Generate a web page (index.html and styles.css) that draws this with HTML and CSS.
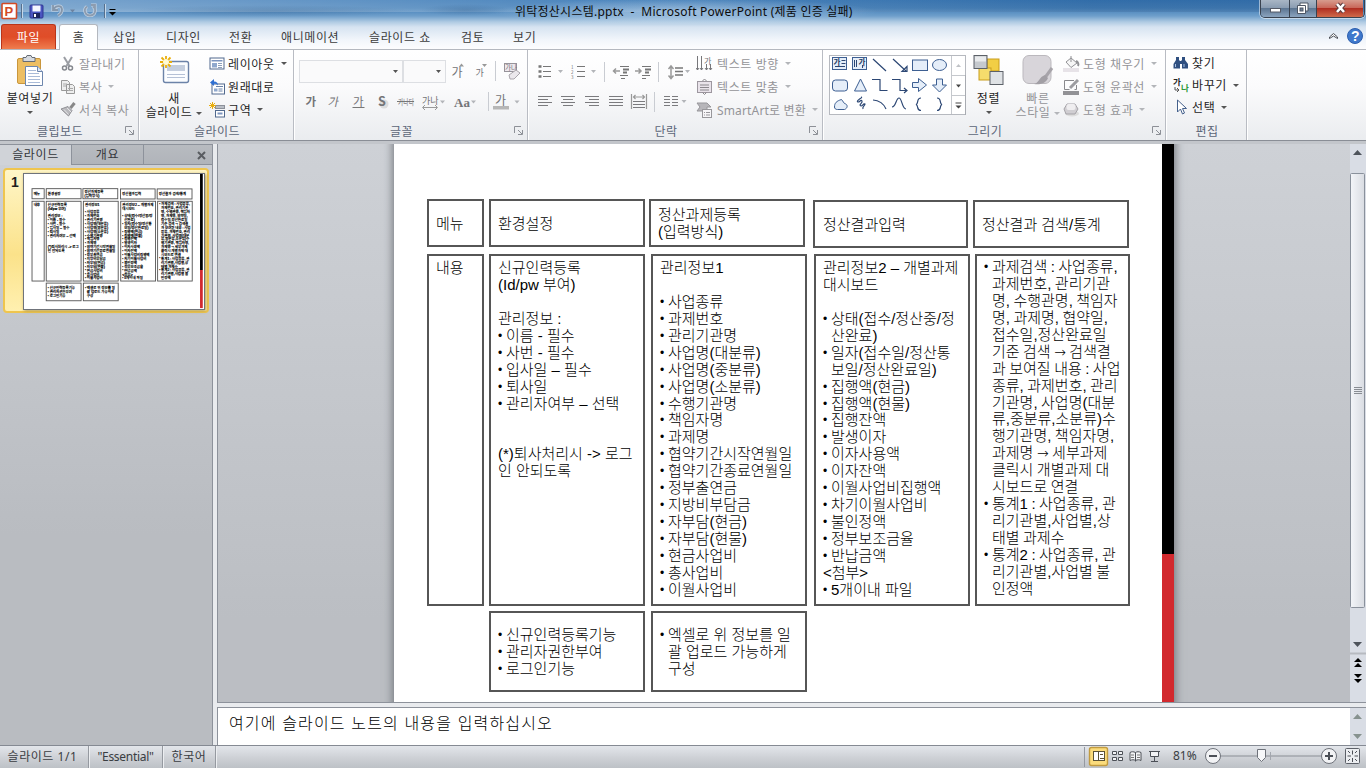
FILE: index.html
```html
<!DOCTYPE html>
<html lang="ko">
<head>
<meta charset="utf-8">
<title>위탁정산시스템.pptx - Microsoft PowerPoint</title>
<link rel="stylesheet" href="styles.css">
</head>
<body>
<div class="app">
  <header class="titlebar">
    <svg class="quick" width="120" height="24" viewBox="0 0 120 24">
      <rect x="2" y="3.500" width="14.500" height="15" rx="1" fill="#fff" stroke="#d24a26" stroke-width="1.600"/>
      <text x="4.500" y="16" class="logo-letter">P</text>
      <path d="M21.500 4v14M104.500 4v14" stroke="#566f8c"/>
      <path d="M22.500 4v14M105.500 4v14" stroke="#c4d8ea"/>
      <rect x="30" y="5" width="13" height="13" rx="1" fill="#4a55c0" stroke="#2f3791"/>
      <rect x="32.500" y="5.500" width="8" height="6" fill="#f4f7ff"/><rect x="33" y="13" width="7" height="5" fill="#1d2560"/><rect x="34" y="14" width="2" height="3" fill="#fff"/>
      <path d="M53 5v5h5M53.500 9.500c2-4 8-5 8.500 0c0 3-2 5-4 6" fill="none" stroke="#c3d3e4" stroke-width="3.200"/>
      <path d="M53 5v5h5M53.500 9.500c2-4 8-5 8.500 0c0 3-2 5-4 6" fill="none" stroke="#8496ab" stroke-width="1.800"/>
      <path d="M70 9.500h5l-2.500 3z" fill="#6b82a0"/>
      <path d="M87 6.500c-4 3-2 9 3 9s7-6 3-9M91 5h4v4" fill="none" stroke="#c3d3e4" stroke-width="3.200"/>
      <path d="M87 6.500c-4 3-2 9 3 9s7-6 3-9M91 5h4v4" fill="none" stroke="#8d9caf" stroke-width="1.800"/>
      <path d="M109.500 9.500h6" stroke="#000"/><path d="M109 12h7l-3.500 3.500z" fill="#000"/>
    </svg>
    <div class="title">위탁정산시스템.pptx&nbsp; -&nbsp; Microsoft PowerPoint (제품 인증 실패)</div>
    <div class="winbtns">
      <span class="wb"><svg width="28" height="17"><rect x="9.500" y="8.500" width="10" height="3.500" fill="#fff" stroke="#555a66"/></svg></span>
      <span class="wb"><svg width="26" height="17"><path d="M10 3h8v8h-8z" fill="#fff" stroke="#4d5664"/><path d="M7.500 5.500h8v8h-8z" fill="#fff" stroke="#4d5664"/><rect x="10" y="8" width="3" height="3" fill="#6e8199" stroke="#4d5664"/></svg></span>
      <span class="wb close"><svg width="46" height="17"><path d="M20 4l7 8M27 4l-7 8" stroke="#5c3a3c" stroke-width="4.500"/><path d="M20 4l7 8M27 4l-7 8" stroke="#fff" stroke-width="2.600"/></svg></span>
    </div>
  </header>
  <nav class="tabs">
    <span class="file">파일</span><span class="tab on">홈</span><span class="tab t3">삽입</span><span class="tab t4">디자인</span><span class="tab t5">전환</span><span class="tab t6">애니메이션</span><span class="tab t7">슬라이드 쇼</span><span class="tab t8">검토</span><span class="tab t9">보기</span>
    <svg class="help" width="42" height="24"><path d="M5.500 14.500v-1.500l4-3.500l4 3.500v1.500l-4-2.500z" fill="#fff" stroke="#4b4f57"/><circle cx="31" cy="12" r="7.500" fill="#3f78cc" stroke="#2c5fae"/><text x="27" y="17" class="q">?</text></svg>
  </nav>

  <section class="ribbon">
    <div class="group g1">
      <div class="body">
        <div class="big paste">
          <svg width="30" height="32"><rect x="2.500" y="3.500" width="23" height="25" rx="1.500" fill="#edbe62" stroke="#c9963c"/><path d="M8 2.500h3l1-2h4l1 2h3v4H8z" fill="#d5d9df" stroke="#666c75"/><path d="M10.500 11.500h12l5 5v14h-17z" fill="#fff" stroke="#6d86ad"/><path d="M13 15.500h8M13 18.500h11M13 21.500h12M13 24.500h12M13 27.500h12" stroke="#a9bbd8"/><path d="M22.500 11.500v5h5" fill="#dce6f5" stroke="#6d86ad"/></svg>
          <span>붙여넣기</span><i class="ar"></i>
        </div>
        <div class="rows off">
          <div><svg width="16" height="16"><path d="M4 1l5.500 9M12 1l-5.500 9" stroke="#9a9da3" stroke-width="2"/><circle cx="4.500" cy="12" r="2" fill="none" stroke="#85888e" stroke-width="1.500"/><circle cx="10.500" cy="12" r="2" fill="none" stroke="#85888e" stroke-width="1.500"/></svg><span>잘라내기</span></div>
          <div><svg width="16" height="16"><path d="M1.500 1.500h6l2 2v8h-8zM6.500 5.500h6l2 2v7h-8z" fill="#eee" stroke="#999"/><path d="M3 5h4M3 7h3M8 9.500h5M8 11.500h5" stroke="#aaa"/></svg><span>복사</span><i class="ar"></i></div>
          <div><svg width="16" height="16"><path d="M14.500 1l-4 5" stroke="#888" stroke-width="3"/><path d="M1 7l7-2.500l4 4L8.500 14z" fill="#b8b8bc" stroke="#929297"/><path d="M4 7.500l4.500 5M7 6l4 4" stroke="#e4e4e6"/></svg><span>서식 복사</span></div>
        </div>
      </div>
      <div class="cap">클립보드</div><svg class="dl" width="9" height="9"><use href="#launcher"/></svg>
    </div>

    <div class="group g2">
      <div class="body">
        <div class="big newslide">
          <svg width="32" height="32"><rect x="5.500" y="6.500" width="25" height="21" rx="2" fill="#fbfdff" stroke="#6c83a8" stroke-width="1.400"/><rect x="9" y="10" width="18" height="6" fill="#c4cede"/><path d="M9 19.500h18M9 22.500h18" stroke="#b5c1d6"/><path d="M8 1v12M2 7h12M3.500 2.500l9 9M12.500 2.500l-9 9" stroke="#e9ae0c" stroke-width="1.800"/><circle cx="8" cy="7" r="3" fill="#fffbd5"/></svg>
          <span>새</span><span>슬라이드<i class="ar"></i></span>
        </div>
        <div class="rows">
          <div><svg width="16" height="16"><rect x="1" y="2" width="14" height="11" fill="#fff" stroke="#50698e"/><rect x="2.500" y="4" width="11" height="1.500" fill="#7c95bf"/><rect x="3" y="7" width="5" height="4.500" fill="#8fa8cd"/><path d="M9 7.500h4M9 9.500h4M9 11.500h4" stroke="#8ea0bb"/></svg><span>레이아웃</span><i class="ar"></i></div>
          <div><svg width="16" height="16"><rect x="3" y="5" width="12.500" height="10" fill="#fff" stroke="#50698e"/><path d="M7 7.500h7M9.500 10h4M9.500 12h4" stroke="#6a82a8"/><rect x="5" y="9.500" width="3.500" height="3" fill="#8fa8cd"/><path d="M1 3.500L5 0v2.500c3 0 4 2 4 4c-1-1.500-2-2-4-1.800V7z" fill="#2f6fd2"/></svg><span>원래대로</span></div>
          <div><svg width="16" height="16"><rect x="6.500" y="3.500" width="9" height="3" fill="#b9bec6" stroke="#8b9099"/><rect x="6.500" y="8.500" width="9" height="6.500" fill="#fff" stroke="#50698e"/><path d="M8.500 11.500h5" stroke="#7c95bf" stroke-width="2"/><path d="M3.500 0v7M0 3.500h7M1 1l5 5M6 1l-5 5" stroke="#e9ae0c"/></svg><span>구역</span><i class="ar"></i></div>
        </div>
      </div>
      <div class="cap">슬라이드</div>
    </div>

    <div class="group g3">
      <svg class="cluster" width="233" height="72" viewBox="294 51 233 72">
        <rect x="299.500" y="60.500" width="103" height="22" fill="#fafafb" stroke="#dddfe3"/><rect x="403.500" y="60.500" width="42" height="22" fill="#fafafb" stroke="#dddfe3"/>
        <path d="M393 70h5l-2.500 3zM436 70h5l-2.500 3z" fill="#555"/>
        <text x="451.500" y="76.500" class="k" font-size="12">가</text><path d="M459 66.500h5l-2.500-3zM482 64h5l-2.500 3z" fill="#999"/>
        <text x="475.500" y="76" class="k" font-size="9">가</text>
        <path d="M495.500 61v20M488.500 92v19" stroke="#c9ccd2"/>
        <rect x="504.500" y="63.500" width="12" height="8" fill="#eee9ee" stroke="#97939a"/><text x="505" y="70" class="k" font-size="6.500">가나</text><path d="M509 75l7-5l4 3l-6 6h-4z" fill="#ebe8ec" stroke="#aaa6ac"/>
        <text x="305.500" y="106" class="k" font-size="11.500" font-weight="bold">가</text>
        <text transform="translate(327.500 106) skewX(-12)" class="k" font-size="11.500">가</text>
        <text x="353" y="106" class="k" font-size="11.500">가</text><path d="M352.500 107.500h12" stroke="#777"/>
        <circle cx="384" cy="104" r="4.500" fill="#ccc" opacity=".6"/><text x="378" y="106" class="k" font-size="12.500" font-weight="bold">S</text>
        <text x="398" y="105" class="k" font-size="8.500" textLength="16" lengthAdjust="spacingAndGlyphs">가나다</text><path d="M397 101.500h17" stroke="#777"/>
        <text x="422" y="104" class="k" font-size="9">가나</text><path d="M423 107.500h14M425 105l-2.500 2.500l2.500 2.500M435 105l2.500 2.500l-2.500 2.500" fill="none" stroke="#999"/>
        <text x="454" y="107" class="k serif" font-size="13">Aa</text>
        <path d="M440 100.500h5l-2.500 3zM471 100.500h5l-2.500 3zM514.500 100.500h5l-2.500 3z" fill="#b3b5b9"/>
        <text x="495" y="105" class="k" font-size="12">가</text><rect x="493" y="106" width="16" height="3.500" fill="#b6b6b6"/>
      </svg>
      <div class="cap">글꼴</div><svg class="dl" width="9" height="9"><use href="#launcher"/></svg>
    </div>

    <div class="group g4">
      <div class="body">
      <svg class="cluster" width="168" height="72" viewBox="528 51 168 72">
        <g stroke="#777" fill="none">
        <path d="M543 66.500h8M543 71.500h8M543 76.500h8M577 66.500h8M577 71.500h8M577 76.500h8"/>
        <path d="M538.500 66.500h3M538.500 71.500h3M538.500 76.500h3" stroke-width="2.500"/>
        <path d="M620 66.500h9M620 75.500h8M621 78.500h4M642 66.500h9M642 75.500h8M642 78.500h4" /><path d="M623 69.500h6M623 72.500h4M645 69.500h6M645 72.500h4" stroke-width="2"/><path d="M620 71h-6M616 68.500l-2.500 2.500l2.500 2.500M635 71h6M638.500 68.500l2.500 2.500l-2.500 2.500" stroke="#999" stroke-width="1.500"/>
        <path d="M671 67v10M668.500 69l2.500-3l2.500 3M668.500 75.500l2.500 3l2.500-3" stroke="#999" stroke-width="1.500"/><path d="M675 68h8M675 71.500h8M675 75h8" stroke-width="1.300"/>
        </g>
        <text x="571" y="69" class="k" font-size="4.500">1</text><text x="571" y="74" class="k" font-size="4.500">2</text><text x="571" y="79" class="k" font-size="4.500">3</text>
        <path d="M604.500 62v20M658.500 62v20M654.500 92v20" stroke="#c9ccd2"/>
        <path d="M558 70h5l-2.500 3zM591 70h5l-2.500 3zM685 70h5l-2.500 3zM681.500 100h5l-2.500 3z" fill="#b3b5b9"/>
        <g stroke="#7b7b7e" stroke-width="1.200"><path d="M538 96.500h14M538 99.500h10M538 102.500h14M538 105.500h10M561 96.500h14M563 99.500h10M561 102.500h14M563 105.500h10M585 96.500h14M589 99.500h10M585 102.500h14M589 105.500h10M609 96.500h14M609 99.500h14M609 102.500h14M609 105.500h14M633 101.500h12M633 104.500h12M633 107.500h12M672 96.500h6M672 99.500h6M672 102.500h6M672 105.500h6M664 96.500h6M664 99.500h6M664 102.500h6M664 105.500h6"/><path d="M631.500 94v15M646.500 94v15M633 97h12M635.500 95l-2 2l2 2M642.500 95l2 2l-2 2" fill="none" stroke="#999"/></g>
      </svg>
        <div class="rows off">
          <div><svg width="17" height="16"><path d="M1.500 0v14M5.500 0v14M10.500 8v6M14.500 8v6M0 12l1.500 2l1.500-2M4 12l1.500 2l1.500-2M9 12l1.500 2l1.500-2M13 12l1.500 2l1.500-2" fill="none" stroke="#77777a"/><text x="8" y="7.500" class="k" font-size="8">가</text></svg><span>텍스트 방향</span><i class="ar"></i></div>
          <div><svg width="17" height="16"><rect x="1.500" y="2.500" width="14" height="11" fill="#e9e3ea" stroke="#9d979f"/><path d="M4 6h9M4 8.500h9M4 11h9M6.500 2l2-2l2 2M6.500 13.500l2 2l2-2" fill="none" stroke="#8b888d"/></svg><span>텍스트 맞춤</span><i class="ar"></i></div>
          <div><svg width="17" height="16"><path d="M1 1h10l4 4h-4v4H1l3-4z" fill="#b7b6ba" stroke="#98979b"/><rect x="6.500" y="7.500" width="9" height="8" fill="#f7f6f8" stroke="#98979b"/><path d="M8 10.500h1M10 10.500h4M8 13h1M10 13h4" stroke="#98979b"/></svg><span class="smart">SmartArt로 변환</span><i class="ar"></i></div>
        </div>
      </div>
      <div class="cap">단락</div><svg class="dl" width="9" height="9"><use href="#launcher"/></svg>
    </div>

    <div class="group g5">
      <div class="body">
      <svg class="cluster" width="142" height="72" viewBox="823 51 142 72">
        <rect x="829.500" y="55.500" width="136" height="59" fill="#fff" stroke="#b6b9bf"/>
        <path d="M951.500 56v58M952 75.500h13M952 95.500h13" stroke="#c5c8cd"/><path d="M965.500 75v40" stroke="#a8abb1"/>
        <path d="M956 67h5l-2.500-3z" fill="#c0c2c6"/><path d="M956 84.500h5l-2.500 3zM955.500 105.500h6l-3 3z" fill="#444"/><path d="M955.500 103h6" stroke="#444"/>
        <g fill="#e5eef9" stroke="#3d5f92">
          <rect x="832.500" y="57.500" width="14" height="12"/><rect x="852.500" y="57.500" width="14" height="12"/>
          <rect x="912.500" y="60" width="15" height="10.500"/><ellipse cx="939.500" cy="65" rx="7" ry="5.500"/>
          <rect x="832.500" y="80" width="15" height="11" rx="3"/><path d="M860.500 79l6 12h-12z"/>
          <path d="M912.500 82.500h6v-4l8 6.500l-8 6.500v-4h-6zM936.500 79h6v6h4l-7 7l-7-7h4z"/>
          <path d="M834.500 107c0-4 2-6 7-7.500l3 4c4 1 3 5 0 6h-7c-2 0-3-1-3-2.500z"/>
        </g>
        <g fill="none" stroke="#2c4774">
          <path d="M841.500 60.500h4M841.500 63.500h4M835 66.500h10M854.500 60v7M856.500 60v7M862.500 65v3"/>
          <path d="M873 59l13 12M893 59l13 12M907 66.500v5h-5zM872 79.500h8v11h7.500M892 79.500h8v11h7M904 88l3 2.500l-3 2.500" stroke-width="1.200"/>
          <path d="M861 97c3 0-6 4-3 5c2 0 3-3 4-1c1 2-4 4-1 5c2 0 2-3 4-2c0 2-3 2-2 5M873 100c6 0 11 4 13 9M892 107c4 0 4-9 7-9s3 11 7 11M921 98c-5 0-2 6-5 6.500c3 1 0 6 5 6M937 98c5 0 2 6 5 6.500c-3 1 0 6-5 6" stroke-width="1.200"/>
        </g>
        <text x="833.500" y="64.500" class="k navy" font-size="7.500">가</text><text x="858.500" y="64.500" class="k navy" font-size="7.500">가</text>
      </svg>
        <div class="big arrange"><svg width="32" height="32"><rect x="14" y="4" width="12" height="12" fill="#f2ce45" stroke="#c99d1d"/><rect x="6" y="13" width="12" height="12" fill="#f5dc6c" stroke="#c99d1d"/><rect x="1" y="0.500" width="13" height="13" fill="#c5c9ce" stroke="#5c6168"/><rect x="17" y="16.500" width="13" height="13" fill="#dfe2e5" stroke="#5c6168"/><path d="M2 1.500h11v5H2z" fill="#e9ebed"/></svg><span>정렬</span><i class="ar"></i></div>
        <div class="big quickstyle off"><svg width="32" height="32"><rect x="1" y="0.500" width="28" height="28" rx="6" fill="#d8d5da" stroke="#bbb8bd"/><path d="M30 13l-8 11" stroke="#a7a4aa" stroke-width="3"/><path d="M23 20l3 3c-2 5-7 7-14 6c5-1 5-7 11-9z" fill="#a29fa5"/></svg><span>빠른</span><span>스타일<i class="ar"></i></span></div>
        <div class="rows off">
          <div><svg width="17" height="16"><rect x="0" y="12" width="16" height="4" fill="#e7e3e8"/><path d="M3 6l5-4l6 5l-6 4.500zM8 6V0" fill="#f6f6f6" stroke="#929296"/><path d="M13 5c2 1 3 3 2 5" fill="none" stroke="#929296" stroke-width="2"/></svg><span>도형 채우기</span><i class="ar"></i></div>
          <div><svg width="17" height="16"><rect x="0" y="12" width="16" height="4" fill="#929296"/><path d="M11 1.500H1.500v9h5M13.500 6v4.500h-2" fill="none" stroke="#88888c"/><path d="M15 1L7 9" stroke="#9c9ca0" stroke-width="3"/></svg><span>도형 윤곽선</span><i class="ar"></i></div>
          <div><svg width="17" height="16"><ellipse cx="9" cy="11.500" rx="7" ry="3" fill="#ddd"/><path d="M4 2h8l3 5l-3 5H3L1 7z" fill="#d0ced2" stroke="#a5a3a8"/><rect x="3.500" y="2" width="9" height="6" rx="2" fill="#efeef0"/></svg><span>도형 효과</span><i class="ar"></i></div>
        </div>
      </div>
      <div class="cap">그리기</div><svg class="dl" width="9" height="9"><use href="#launcher"/></svg>
    </div>

    <div class="group g6">
      <div class="body"><div class="rows">
        <div><svg width="16" height="16"><path d="M3 2h3v3l1 1h1l1-1V2h3v3l3 4v4.500H9V9H7v4.500H0.500V9L3 5z" fill="#2f4f80"/><path d="M2.500 9v3M11 9v3" stroke="#a9c1e2"/></svg><span>찾기</span></div>
        <div><svg width="16" height="16"><text x="0" y="7.500" class="k dark" font-size="8.500" font-weight="bold">가</text><text x="8" y="13.500" class="k green" font-size="8.500" font-weight="bold">나</text><path d="M2 10v3h4M4 11l2 2l-2 2" fill="none" stroke="#555"/></svg><span>바꾸기</span><i class="ar"></i></div>
        <div><svg width="16" height="16"><path d="M4.500 1v12l3-3l2 5l2-1l-2-4.500h4z" fill="#fff" stroke="#44608c"/></svg><span>선택</span><i class="ar"></i></div>
      </div></div>
      <div class="cap">편집</div>
    </div>
  </section>

  <main class="work">
    <aside class="pane">
      <div class="ptabs"><span class="pt on">슬라이드</span><span class="pt two">개요</span><svg class="px" width="12" height="12"><path d="M2 2l7 7M9 2L2 9" stroke="#595c61" stroke-width="2"/></svg></div>
      <div class="thumb"><b>1</b><div class="mini" id="mini"></div></div>
    </aside>
    <div class="center">
      <div class="stage">
        <div class="canvas">
          <div class="slide" id="slide">
            <div class="box mid b1">메뉴</div>
            <div class="box mid b2">환경설정</div>
            <div class="box mid b3">정산과제등록<br>(입력방식)</div>
            <div class="box mid b4">정산결과입력</div>
            <div class="box mid b5">정산결과 검색/통계</div>
            <div class="box c1">내용</div>
            <div class="box c2">신규인력등록<br>(Id/pw 부여)<br><br>관리정보 :<ul><li>이름 - 필수<li>사번 - 필수<li>입사일 – 필수<li>퇴사일<li>관리자여부 – 선택</ul><br><br>(*)퇴사처리시 -&gt; 로그<br>인 안되도록</div>
            <div class="box c3">관리정보1<br><br><ul><li>사업종류<li>과제번호<li>관리기관명<li>사업명(대분류)<li>사업명(중분류)<li>사업명(소분류)<li>수행기관명<li>책임자명<li>과제명<li>협약기간시작연월일<li>협약기간종료연월일<li>정부출연금<li>지방비부담금<li>자부담(현금)<li>자부담(현물)<li>현금사업비<li>총사업비<li>이월사업비</ul></div>
            <div class="box c4">관리정보2 – 개별과제<br>대시보드<br><br><ul><li>상태(접수/정산중/정<br>산완료)<li>일자(접수일/정산통<br>보일/정산완료일)<li>집행액(현금)<li>집행액(현물)<li>집행잔액<li>발생이자<li>이자사용액<li>이자잔액<li>이월사업비집행액<li>차기이월사업비<li>불인정액<li>정부보조금율<li>반납금액</ul>&lt;첨부&gt;<ul><li>5개이내 파일</ul></div>
            <div class="box c5"><ul><li>과제검색 : 사업종류,<br>과제번호, 관리기관<br>명, 수행관명, 책임자<br>명, 과제명, 협약일,<br>접수일,정산완료일<br>기준 검색 <span class="arrow">→</span> 검색결<br>과 보여질 내용 : 사업<br>종류, 과제번호, 관리<br>기관명, 사업명(대분<br>류,중분류,소분류)수<br>행기관명, 책임자명,<br>과제명 <span class="arrow">→</span> 세부과제<br>클릭시 개별과제 대<br>시보드로 연결<li>통계1 : 사업종류, 관<br>리기관별,사업별,상<br>태별 과제수<li>통계2 : 사업종류, 관<br>리기관별,사업별 불<br>인정액</ul></div>
            <div class="box mid d2"><ul><li>신규인력등록기능<li>관리자권한부여<li>로그인기능</ul></div>
            <div class="box mid d3"><ul><li>엑셀로 위 정보를 일<br>괄 업로드 가능하게<br>구성</ul></div>
            <div class="stripe"></div>
          </div>
        </div>
        <svg class="vscroll" width="16" height="558"><defs><linearGradient id="sb"><stop offset="0" stop-color="#f3f5f9"/><stop offset="1" stop-color="#d9dce2"/></linearGradient></defs><path d="M3 11h9l-4.500-5z" fill="#4e535b"/><rect x=".5" y="29.500" width="14" height="434" rx="1" fill="url(#sb)" stroke="#8a919c"/><path d="M4 243.500h8M4 245.500h8M4 247.500h8M4 249.500h8" stroke="#888c93"/><path d="M3 498h9l-4.500 5z" fill="#4e535b"/><path d="M0 509.500h16" stroke="#b7bac0" stroke-width="2"/><path d="M4 518h8l-4-4zM4 523h8l-4-4zM4 530h8l-4 4zM4 535h8l-4 4z" fill="#000"/></svg>
      </div>
      <div class="notes"><span>여기에 슬라이드 노트의 내용을 입력하십시오</span>
        <svg class="nscroll" width="16" height="38"><path d="M3 11h9l-4.500-5zM3 26h9l-4.500 5z" fill="#87928f"/></svg></div>
    </div>
  </main>

  <footer class="status">
    <span class="s1">슬라이드 1/1</span><span class="s2">"Essential"</span><span class="s3">한국어</span>
    <svg class="zoomer" width="286" height="22" viewBox="1080 746 286 22">
      <path d="M1084.500 747v20" stroke="#9599a0"/>
      <rect x="1089.500" y="747.500" width="18" height="18" rx="2" fill="#fbdc7c" stroke="#c29b3f" stroke-width="1.400"/>
      <rect x="1093.500" y="751.500" width="11" height="9" fill="#fff" stroke="#5b5336"/><path d="M1098.500 751v10M1100 754.500h3M1100 758.500h4" stroke="#5b5336"/>
      <path d="M1112.500 751.500h4v3h-4zM1118.500 751.500h4v3h-4zM1112.500 757.500h4v3h-4zM1118.500 757.500h4v3h-4z" fill="#f3f4f6" stroke="#4c5057"/>
      <path d="M1135.500 752.500c-2-1-4-1-5.500 0v8c2-1 4-1 5.500 0c2-1 4-1 5.500 0v-8c-2-1-4-1-5.500 0zv9" fill="#f3f4f6" stroke="#4c5057"/><path d="M1131 755h3M1131 757.500h3M1137 755h3M1137 757.500h3" stroke="#777"/>
      <path d="M1149 751.500h11M1150.500 752v4.500h8V752M1154.500 757v4M1151 761.500h7" fill="#f3f4f6" stroke="#4c5057"/>
      <text x="1173" y="760" class="pct">81%</text>
      <path d="M1221 756h100" stroke="#8a8e95"/><path d="M1270.500 752v8" stroke="#a3a7ae"/>
      <circle cx="1213" cy="756" r="7.500" fill="#f2f3f5" stroke="#6e727a"/><path d="M1209 756h8" stroke="#4c5057" stroke-width="2"/>
      <circle cx="1329" cy="756" r="7.500" fill="#f2f3f5" stroke="#6e727a"/><path d="M1325 756h8M1329 752v8" stroke="#4c5057" stroke-width="2"/>
      <path d="M1257.500 749.500h8v8l-4 4l-4-4z" fill="#f6f7f9" stroke="#6e727a"/>
      <rect x="1345.500" y="748.500" width="14" height="15" rx="1" fill="#eceef1" stroke="#5c6068"/><path d="M1352.500 750.500v4M1352.500 758v4M1347.500 756h3.500M1354.500 756h3.500M1348 751l2 2M1357 751l-2 2M1348 761l2-2M1357 761l-2-2" stroke="#4c5057"/>
    </svg>
  </footer>
</div>
<svg width="0" height="0" class="defs"><defs><g id="launcher"><path d="M.5 7V.5H7M4 4l4 4M8.500 4v4.500H4" fill="none" stroke="#8d9097"/></g></defs></svg>
<script src="main.js"></script>
</body>
</html>
```

FILE: styles.css
```css
* { box-sizing: border-box; }
body { margin: 0; font: 12px "Noto Sans", "Noto Sans CJK KR", sans-serif; color: #1e1e1e; overflow: hidden; }
.app { width: 1366px; height: 768px; display: flex; flex-direction: column; overflow: hidden;
  background: linear-gradient(90deg, rgba(255,255,255,.34), rgba(255,255,255,.1) 45%, rgba(0,20,60,.1) 80%, rgba(0,20,60,.12)) 0 0/100% 12px no-repeat,
  linear-gradient(#3777b5 0, #4480b9 8px, #6f9fcb 16px, #b0cbe3 22px, #d6e3f1 27px, #f2f6fb 40px, #fdfdfe 49px) 0 0/100% 50px no-repeat; }
.defs { position: absolute; }
svg { display: block; flex: none; }
.titlebar { height: 24px; display: flex; flex: none; align-items: flex-start;
  background: radial-gradient(ellipse at center, rgba(30,70,115,.22), transparent 70%) 125px 5px/290px 12px no-repeat,
  radial-gradient(ellipse at center, rgba(30,70,115,.22), transparent 70%) 420px 4px/90px 12px no-repeat,
  radial-gradient(ellipse at center, rgba(225,238,250,.5), transparent 70%) 490px -2px/390px 28px no-repeat; }
.quick { margin-right: 395px; }
.logo-letter { font: bold 13px "Liberation Sans", sans-serif; fill: #d24a26; }
.title { font-size: 12px; line-height: 23px; letter-spacing: .24px; color: #0c0c0c; white-space: nowrap; }
.winbtns { display: flex; width: 105px; height: 18px; margin-left: auto; margin-right: 1px; border: 1px solid #39424f; border-top: 0; border-radius: 0 0 5px 5px; overflow: hidden; box-shadow: 0 0 0 1px rgba(255,255,255,.5); }
.wb { height: 17px; background: linear-gradient(#a9b6c5, #8b9db2 45%, #5d7692 50%, #8ba4bf); border-right: 1px solid #39424f; overflow: hidden; flex: none; }
.wb.close { border: 0; background: linear-gradient(#d79c8e, #c9685a 45%, #b02f22 50%, #cf6a4a); }
.tabs { height: 26px; flex: none; display: flex; border-bottom: 1px solid #b4b8bf; font-size: 12px; letter-spacing: .6px; color: #3c3c3c; }
.file { width: 55px; margin-left: 1px; height: 25px; border-radius: 3px 3px 0 0; border: 1px solid #b9351a; border-bottom: 0; background: linear-gradient(#de5230, #e04d28 50%, #ef7d4e); color: #fff; text-align: center; line-height: 25px; }
.tab { line-height: 27px; white-space: nowrap; height: 26px; }
.on.tab { width: 39px; margin-left: 3px; margin-right: 15px; background: #fff; border: 1px solid #b4b8bf; border-bottom: 0; border-radius: 3px 3px 0 0; text-align: center; line-height: 25px; }
.t3 { width: 53px; } .t4 { width: 63px; } .t5 { width: 52px; } .t6 { width: 88px; } .t7 { width: 92px; } .t8 { width: 52px; } .t9 { flex: 1; }
.q { font: bold 14px "Liberation Sans", sans-serif; fill: #fff; }
.ribbon { height: 91px; flex: none; display: flex; background: linear-gradient(#fff, #fbfbfc 40%, #eaecef); border-bottom: 1px solid #8a8e96; }
.group { position: relative; height: 90px; padding-top: 1px; border-right: 1px solid #b9bcc3; box-shadow: 1px 0 #fff; flex: none; }
.g1 { width: 139px; } .g2 { width: 155px; } .g3 { width: 234px; } .g4 { width: 295px; } .g5 { width: 343px; } .g6 { width: 81px; }
.body { display: flex; height: 72px; }
.cluster { overflow: visible; }
.cap { text-align: center; line-height: 17px; color: #5c6678; letter-spacing: .5px; padding-right: 18px; }
.g2 .cap, .g6 .cap { padding: 0 0 0 2px; }
.dl { position: absolute; right: 4px; bottom: 5px; }
.big { display: flex; flex-direction: column; align-items: center; letter-spacing: .6px; padding-top: 4px; line-height: 15px; white-space: nowrap; }
.big svg { margin-bottom: 4px; }
.big span { display: flex; align-items: center; }
.big > .ar { margin-top: 5px; }
.paste { width: 60px; }
.newslide { width: 70px; }
.newslide span:last-child, .quickstyle span:last-child { line-height: 14px; }
.arrange { width: 47px; }
.quickstyle { width: 50px; margin-left: 1px; }
.ar { border: 3px solid transparent; border-top-color: #555; border-bottom: 0; width: 6px; height: 3px; margin-left: 6px; flex: none; }
.big .ar { margin-left: 4px; } .big > .ar { margin-left: 0; }
.rows { padding-top: 1px; letter-spacing: .6px; white-space: nowrap; }
.rows > div { height: 23px; display: flex; align-items: center; }
.rows svg { margin-right: 3px; }
.g4 .rows svg { margin-right: 4px; }
.smart { letter-spacing: .15px; }
.off { color: #949498; } .off .ar { border-top-color: #b3b5b9; }
.g6 .rows { margin-left: 7px; } .g6 .rows > div { height: 22px; }
.k { font-family: "Noto Sans CJK KR", sans-serif; fill: #747477; } .serif { font-family: "Liberation Serif", serif; font-weight: bold; } .navy { fill: #22395f; font-weight: bold; }
.dark { fill: #222; } .green { fill: #2e9a3c; }
.work { flex: 1; min-height: 0; display: flex; background: #e9ebee; border-top: 3px solid #c3c6cb; }
.pane { width: 213px; border-right: 1px solid #8d929b; background: linear-gradient(#ced1d6, #b9bcc1 65%); }
.ptabs { display: flex; height: 21px; background: linear-gradient(#b8bbc0, #b0b4ba); border-bottom: 1px solid #8d929b; border-top: 1px solid #8d929b; letter-spacing: .6px; color: #33363b; line-height: 19px; }
.pt { text-align: center; border-right: 1px solid #8d929b; width: 72px; flex: none; }
.pt.on { background: #d0d3d8; height: 20px; }
.px { margin: 5px 0 0 52px; }
.thumb { display: flex; width: 206px; height: 145px; margin: 3px 0 0 3px; border: 2px solid #efc54e; border-radius: 4px; background: linear-gradient(#fff6c8, #fbe28a 60%, #fff0b0); padding: 3px 0 0 6px; }
.thumb b { width: 12px; font: bold 14px/18px "Liberation Sans", sans-serif; }
.mini { width: 182px; height: 137px; border: 1px solid #6f737a; overflow: hidden; background: #fff; box-shadow: 1px 1px 3px #b39b50; }
.mini .slide { transform: scale(.2292); transform-origin: 0 0; box-shadow: none; margin: 0; -webkit-text-stroke: 1px #000; }
.mini .box { border-width: 4px; padding-left: 5px; }
.center { flex: 1; min-width: 0; margin-left: 4px; display: flex; flex-direction: column; }
.stage { height: 559px; flex: none; display: flex; border: 1px solid #8d929b; border-top: 0; border-right: 0; }
.canvas { flex: 1; overflow: hidden; background: linear-gradient(#ced1d6, #bbbec3 85%); padding-left: 176px; }
.slide { position: relative; width: 780px; height: 585px; margin-top: -7px; background: #fff; box-shadow: 0 0 9px 1px #6d7177; font: 300 15px/16.93px "Liberation Sans", "Noto Sans CJK KR", sans-serif; color: #000; }
.box { position: absolute; border: 2px solid #565656; padding: 4px 0 0 7px; white-space: nowrap; }
.box ul { margin: 0; padding: 0; list-style: none; }
.box li { position: relative; padding-left: 8px; }
.box li::before { content: "•"; position: absolute; left: 0; font-size: 12px; }
.mid { display: flex; flex-direction: column; justify-content: center; padding-top: 2px; }
.b1 { left: 33px; top: 62px; width: 57px; height: 48px; }
.b2 { left: 95px; top: 62px; width: 156px; height: 48px; }
.b3 { left: 255px; top: 62px; width: 156px; height: 48px; }
.b4 { left: 419px; top: 63px; width: 155px; height: 48px; padding-left: 8px; }
.b5 { left: 579px; top: 63px; width: 156px; height: 48px; }
.c1, .c2, .c3, .c4, .c5 { top: 117px; height: 352px; }
.c1 { left: 33px; width: 57px; } .c2 { left: 95px; width: 156px; } .c3 { left: 257px; width: 156px; } .c4 { left: 420px; width: 156px; } .c5 { left: 581px; width: 155px; padding-top: 3px; word-spacing: -.7px; }
.d2 { left: 95px; top: 474px; width: 156px; height: 81px; }
.d3 { left: 257px; top: 474px; width: 156px; height: 81px; }
.arrow { font-family: "DejaVu Sans", sans-serif; font-size: 14px; line-height: 1; }
.stripe { position: absolute; right: 0; top: 0; width: 12px; height: 585px; background: linear-gradient(#000 417px, #d2292e 417px); }
.vscroll, .nscroll { background: #d9dde5; }
.notes { flex: 1; margin-top: 4px; background: #fff; border: 1px solid #8d929b; border-right: 0; border-bottom: 0; display: flex; justify-content: space-between; overflow: hidden; font: 300 16px/31px "Liberation Sans", "Noto Sans CJK KR", sans-serif; color: #000; }
.notes span { padding-left: 11px; letter-spacing: 1.15px; }
.status { height: 23px; flex: none; display: flex; border-top: 1px solid #858a93; background: linear-gradient(#e3e6eb, #cfd2d7 50%, #bdc1c6); line-height: 21px; letter-spacing: .55px; color: #3a3d42; white-space: nowrap; }
.status span { border-right: 1px solid #9599a0; box-shadow: 1px 0 #eceef1; text-align: center; }
.s1 { width: 89px; padding-right: 3px; } .status .s2 { width: 74px; letter-spacing: -.3px; font-size: 12px; } .s3 { width: 53px; }
.zoomer { margin-left: auto; }
.pct { font: 12px "Noto Sans", sans-serif; fill: #3a3d42; letter-spacing: 0; }
```

FILE: main.js
```js
// The thumbnail shows a scaled copy of the current slide.
var copy = document.getElementById('slide').cloneNode(true);
copy.removeAttribute('id');
document.getElementById('mini').appendChild(copy);
```
